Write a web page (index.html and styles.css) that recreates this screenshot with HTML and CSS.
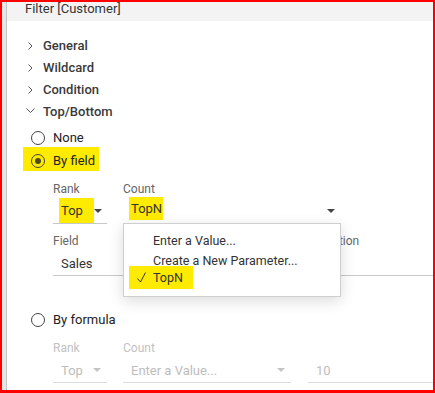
FILE: index.html
```html
<!DOCTYPE html>
<html lang="en">
<head>
  <meta charset="UTF-8">
  <title>Filter [Customer]</title>
  <link rel="stylesheet" href="styles.css">
</head>
<body>
  <div class="frame">
    <div class="side"></div>

    <div class="dialog">
      <div class="dialog-head"><span class="title">Filter [Customer]</span></div>

      <div class="dialog-body">
        <!-- Sections -->
        <ul class="tree">
          <li class="tree-item">
            <svg class="chev" viewBox="0 0 17 22"><path d="M2.5 8.5 L6 12 L2.5 15.5"/></svg>General
          </li>
          <li class="tree-item">
            <svg class="chev" viewBox="0 0 17 22"><path d="M2.5 8.5 L6 12 L2.5 15.5"/></svg>Wildcard
          </li>
          <li class="tree-item">
            <svg class="chev" viewBox="0 0 17 22"><path d="M2.5 8.5 L6 12 L2.5 15.5"/></svg>Condition
          </li>
          <li class="tree-item">
            <svg class="chev" viewBox="0 0 17 22"><path d="M0.5 8.5 L4.5 12.5 L8.5 8.5"/></svg>Top/Bottom
          </li>
        </ul>

        <div class="options">
          <div class="radio-row">
            <label class="radio"><span class="circle"></span><span class="radio-text">None</span></label>
          </div>
          <div class="radio-row">
            <label class="radio checked marked"><span class="circle"></span><span class="radio-text">By field</span></label>
          </div>

          <div class="fields">
            <div class="field-row">
              <div class="field w-rank">
                <div class="lbl">Rank</div>
                <div class="val"><span class="hl hl-rank">Top</span><span class="caret"></span></div>
              </div>
              <div class="field w-count">
                <div class="lbl">Count</div>
                <div class="val"><span class="hl hl-count">TopN</span><span class="caret"></span></div>

                <ul class="menu">
                  <li class="menu-item"><span class="mark"></span>Enter a Value...</li>
                  <li class="menu-item"><span class="mark"></span>Create a New Parameter...</li>
                  <li class="menu-item">
                    <span class="hl hl-item">
                      <span class="mark"><svg class="check" viewBox="0 0 9 11"><path d="M0.5 6.5 L3.5 10 L8.5 0.5"/></svg></span>TopN
                    </span>
                  </li>
                </ul>
              </div>
            </div>

            <div class="field-row">
              <div class="field w-field">
                <div class="lbl">Field</div>
                <div class="val">Sales</div>
              </div>
              <div class="field w-fill">
                <div class="lbl">Aggregation</div>
                <div class="val">Sum</div>
              </div>
            </div>
          </div>

          <div class="radio-row formula-row">
            <label class="radio"><span class="circle"></span><span class="radio-text">By formula</span></label>
          </div>

          <div class="fields disabled">
            <div class="field-row">
              <div class="field w-rank">
                <div class="lbl">Rank</div>
                <div class="val">Top<span class="caret"></span></div>
              </div>
              <div class="field w-count-sm">
                <div class="lbl">Count</div>
                <div class="val">Enter a Value...<span class="caret"></span></div>
              </div>
              <div class="field w-fill">
                <div class="lbl">&nbsp;</div>
                <div class="val">10</div>
              </div>
            </div>
          </div>
        </div>
      </div>
    </div>
  </div>
</body>
</html>
```

FILE: styles.css
```css
* {
  box-sizing: border-box;
}
body {
  margin: 0;
  background: #fff;
  color: #333;
  font-family: Roboto, "Liberation Sans", sans-serif;
}
.frame {
  width: 435px;
  height: 393px;
  border: 2px solid #f00;
  border-bottom-width: 3px;
  display: flex;
  overflow: hidden;
}
.side {
  flex: none;
  width: 5px;
  background: #e6e6e6;
  border-right: 1px solid #c4c4c4;
}
.dialog {
  flex: 1;
  min-width: 0;
  display: flex;
  flex-direction: column;
}
.dialog-head {
  flex: none;
  height: 19px;
  padding-left: 18px;
  background: #f3f3f3;
  font-size: 13px;
  line-height: 14px;
}
.title {
  display: block;
}
.dialog-body {
  padding-top: 13px;
}

/* Tree */
.tree {
  list-style: none;
  margin: 0;
  padding: 0;
}
.tree-item {
  display: flex;
  align-items: center;
  height: 22px;
  padding-left: 19px;
  font-size: 13px;
  font-weight: 500;
  color: #3a3a3a;
}
.chev {
  flex: none;
  width: 17px;
  height: 22px;
  fill: none;
  stroke: #555;
  stroke-width: 1;
}

/* Radios */
.options {
  margin-top: 4px;
  padding-left: 24px;
}
.radio-row {
  display: flex;
  align-items: center;
  height: 23px;
}
.radio {
  position: relative;
  display: inline-flex;
  align-items: center;
  gap: 8px;
  font-size: 13px;
  color: #222;
}
.radio > * {
  position: relative;
}
.marked::before {
  content: "";
  position: absolute;
  left: -8px;
  top: -6px;
  width: 76px;
  height: 24px;
  background: #ffeb00;
}
.circle {
  width: 14px;
  height: 14px;
  border: 1px solid #444;
  border-radius: 50%;
  display: flex;
  align-items: center;
  justify-content: center;
}
.checked .circle::after {
  content: "";
  width: 6px;
  height: 6px;
  border-radius: 50%;
  background: #4a4a1a;
}
.formula-row {
  margin-top: 32px;
}

/* Fields */
.fields {
  padding-left: 22px;
}
.field-row {
  display: flex;
  gap: 16px;
  margin-top: 8px;
}
.field {
  position: relative;
  flex: none;
}
.w-rank { width: 54px; }
.w-count { width: 218px; }
.w-field { width: 225px; }
.w-count-sm { width: 168px; margin-right: 1px; }
.w-fill { flex: 1; }
.lbl {
  font-size: 12px;
  line-height: 19px;
  color: #666;
}
.val {
  display: flex;
  align-items: center;
  justify-content: space-between;
  height: 25px;
  padding: 0 6px 0 8px;
  border-bottom: 1px solid #c8c8c8;
  font-size: 13px;
  color: #333;
}
.w-fill .val,
.w-field .val {
  justify-content: flex-start;
}
.caret {
  width: 0;
  height: 0;
  border-left: 4px solid transparent;
  border-right: 4px solid transparent;
  border-top: 4px solid #444;
}
.hl {
  background: #ffeb00;
}
.hl-rank {
  margin-left: -2px;
  padding: 0 11px 0 2px;
  line-height: 25px;
  margin-bottom: 2px;
}
.hl-count {
  margin-left: -2px;
  padding: 0 1px 0 2px;
  line-height: 23px;
  margin-bottom: 6px;
}

.disabled .lbl { color: #c2c2c2; }
.disabled .val {
  color: #bdbdbd;
  border-bottom-color: #dcdcdc;
}
.disabled .caret { border-top-color: #c4c4c4; }

/* Dropdown menu */
.menu {
  position: absolute;
  top: 43px;
  left: 0;
  z-index: 2;
  width: 218px;
  margin: 0;
  padding: 6px 0;
  list-style: none;
  background: #fff;
  border: 1px solid #cfcfcf;
  box-shadow: 0 4px 14px rgba(0, 0, 0, 0.14);
}
.menu-item {
  display: flex;
  align-items: center;
  height: 20px;
  padding-left: 5px;
  font-size: 12.5px;
  color: #333;
}
.mark {
  flex: none;
  width: 24px;
  display: flex;
  align-items: center;
}
.check {
  width: 9px;
  height: 11px;
  margin-left: 8px;
  fill: none;
  stroke: #333;
  stroke-width: 1;
}
.hl-item {
  display: inline-flex;
  align-items: center;
  height: 23px;
  margin-bottom: 5px;
  padding-right: 10px;
}
```
